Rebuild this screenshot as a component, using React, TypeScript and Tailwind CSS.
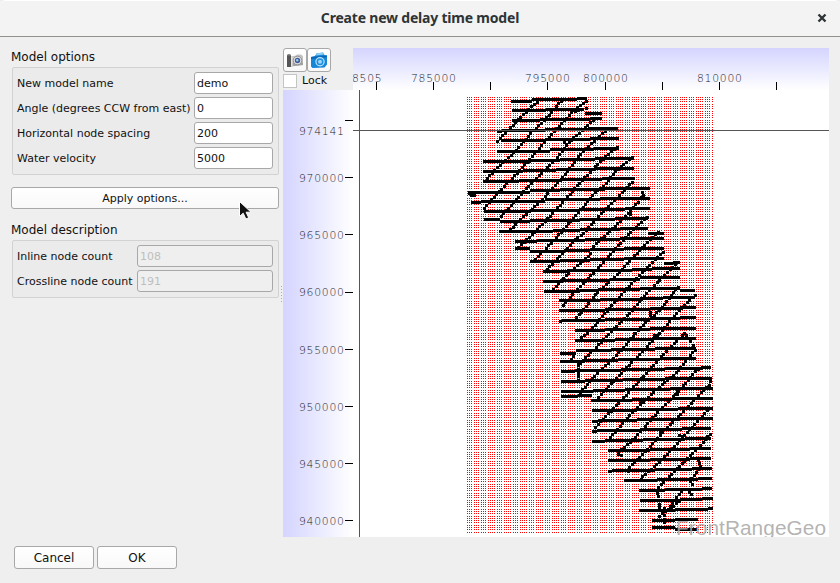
import type { ReactNode } from "react";

// Survey passes: [start x, then pairs of (centre y, end x)], in plot pixels.
const passes: number[][] = [
  [511, 101, 532, 99, 577, 98.3, 587],
  [512, 110.5, 546, 109.5, 584],
  [585, 113.5, 602],
  [512, 120.5, 540, 119.5, 590, 118.5, 602],
  [497, 131.5, 502, 130.5, 545, 129.3, 588, 128.5, 618],
  [501, 140.5, 545, 139.5, 590, 138.5, 619],
  [497, 151.3, 550, 149.7, 594, 148.3, 619],
  [483, 161.3, 531, 160.5, 560, 159.3, 595, 158.5, 634],
  [483, 171.3, 523, 170.3, 556, 169.3, 596, 168.5, 634],
  [483, 181.3, 519, 180.4, 560, 179.3, 602, 178.5, 635],
  [468, 192.3, 530, 190.7, 560, 189.6, 605, 188.5, 650],
  [471, 202.4, 481, 201.3, 545, 199.7, 600, 198.5, 650],
  [484, 211.5, 530, 210.4, 580, 209.3, 625, 208.4, 650],
  [484, 219.4, 500, 221.3, 530, 220.3, 580, 219.4, 615, 218.4, 648],
  [499, 231.3, 553, 230.5, 580, 229.4, 620, 228.4, 648],
  [648, 233.5, 664],
  [515, 241.3, 537, 240.4, 585, 239.4, 620, 238.4, 664],
  [515, 248.4, 530, 251.4, 565, 250.4, 590, 249.4, 624, 248.4, 664],
  [530, 261.4, 560, 260.4, 590, 259.4, 624, 258.4, 664],
  [664, 263.5, 673, 262.4, 680],
  [543, 271.4, 567, 270.4, 632, 269, 652, 268.4, 680],
  [543, 281.4, 560, 280.4, 610, 279.4, 640, 277.6, 680],
  [544, 291.4, 580, 290.4, 598, 289.4, 640, 288.4, 680, 290.4, 695],
  [559, 300.4, 600, 299.4, 640, 298.4, 663, 297.4, 695],
  [559, 310.4, 605, 309.4, 650, 308.4, 680, 307.4, 696],
  [559, 321.4, 562, 320.4, 605, 319.4, 650, 318.4, 680, 317.4, 696],
  [575, 330.4, 605, 329.4, 650, 328.4, 696],
  [575, 340.4, 615, 339.4, 653, 338.4, 696],
  [576, 350.5, 611, 349.5, 655, 348.4, 696],
  [560, 353.5, 576],
  [560, 361.4, 585, 360.4, 618, 359.4, 660, 358.4, 696],
  [561, 371.4, 575, 370.4, 621, 369.4, 665, 368.4, 701, 367.4, 709],
  [561, 381.4, 585, 380.6, 623, 379.5, 665, 378.4, 712],
  [561, 391.4, 593, 390.4, 625, 389.4, 670, 388.4, 713],
  [561, 396.4, 578, 395.6, 592],
  [591, 400.4, 632, 399.4, 672, 398.4, 713],
  [592, 410.4, 635, 409.4, 678, 408.4, 713],
  [592, 421.3, 598, 420.4, 637, 419.4, 680, 418.4, 713],
  [592, 431.4, 597, 430.4, 640, 429.4, 682, 428.4, 711],
  [592, 441.4, 605, 440.4, 643, 439.4, 685, 438.4, 711],
  [608, 450.4, 650, 449.4, 690, 448.4, 711],
  [608, 460.4, 650, 459.4, 690, 458.4, 711],
  [608, 471.4, 612, 470.4, 655, 469.4, 692, 468.4, 712],
  [624, 480.4, 657, 479.4, 698, 478.4, 712],
  [639, 490.4, 665, 489.4, 702, 488.4, 712],
  [640, 500.4, 680, 499.4, 702, 498.4, 713],
  [639, 510.4, 675, 509.4, 708, 508.4, 713],
  [652, 520.4, 675, 519.4, 698],
  [652, 527.4, 675, 529.4, 697],
];

// Cross passes as flat x, y lists.
const crossings: number[][] = [
  [537, 102, 531, 107, 497, 142],
  [561, 101, 551, 114, 532, 132, 515, 152, 503, 162, 487, 179],
  [586, 101, 573, 111, 543, 144, 523, 167, 497, 194, 484, 209],
  [593, 120, 580, 133, 573, 138, 557, 158, 527, 188, 500, 218],
  [605, 131, 580, 155, 567, 173, 537, 205, 522, 218, 509, 232],
  [617, 147, 597, 165, 580, 183, 553, 213, 532, 235, 517, 249],
  [632, 157, 627, 162, 615, 172, 605, 185, 595, 193, 578, 213, 557, 237, 533, 262],
  [632, 182, 622, 193, 602, 213, 582, 235, 577, 238, 545, 272],
  [638, 202, 627, 215, 595, 245, 588, 257, 571, 271, 550, 293],
  [647, 217, 630, 233, 610, 255, 590, 277, 575, 292, 562, 307],
  [658, 232, 640, 250, 617, 275, 597, 293, 586, 307, 573, 322],
  [663, 252, 633, 282, 608, 310, 597, 323, 590, 331, 577, 342],
  [678, 262, 650, 290, 630, 313, 608, 335, 577, 367],
  [678, 287, 663, 307, 640, 328, 620, 352, 593, 378, 580, 393],
  [695, 295, 677, 313, 660, 333, 642, 352, 620, 375, 598, 398],
  [693, 345, 685, 333, 663, 355, 645, 375, 617, 405, 595, 428],
  [695, 350, 677, 372, 653, 393, 633, 412, 610, 438],
  [709, 367, 697, 370, 678, 392, 657, 413, 635, 438, 618, 453],
  [710, 378, 710, 384, 683, 412, 665, 430, 645, 452, 630, 467, 628, 473],
  [710, 408, 688, 432, 660, 462, 642, 477, 641, 483],
  [710, 434, 702, 444, 688, 458, 658, 488],
  [698, 460, 701, 466, 690, 481, 694, 487],
  [684, 489, 677, 497, 668, 510, 658, 517],
  [689, 492, 693, 497],
  [679, 501, 669, 511],
  [656, 490, 659, 498, 660, 510],
  [664, 508, 664, 525],
  [469, 193, 471, 196, 475, 191, 474, 198],
  [564, 142, 568, 146],
  [642, 192, 644, 195, 641, 198],
  [578, 362, 578, 382],
  [571, 359, 575, 354],
  [660, 431, 660, 437],
  [650, 312, 650, 317],
  [630, 211, 630, 215],
  [654, 335, 653, 342],
  [634, 333, 633, 338],
  [677, 391, 677, 398],
  [640, 401, 645, 403],
  [679, 435, 684, 437],
  [586, 108, 573, 112],
  [618, 454, 624, 456],
];

function stamps(p: number[]) {
  const out: [number, number][] = [];
  let carry = 0;
  for (let i = 0; i + 3 < p.length; i += 2) {
    const dx = p[i + 2] - p[i];
    const dy = p[i + 3] - p[i + 1];
    const len = Math.hypot(dx, dy);
    let d = carry;
    for (; d <= len; d += 3.7) {
      out.push([Math.round(p[i] + (dx * d) / len - 1.5), Math.round(p[i + 1] + (dy * d) / len - 1.5)]);
    }
    carry = d - len;
  }
  return out;
}

const columns = Array.from({ length: 108 }, (_, i) => Math.floor(467.42 + i * 2.2867));
const rows = Array.from({ length: 191 }, (_, i) => Math.floor(97.4 + i * 2.288));
const columnPath = columns.map((x) => `M${x} 0h1v1h-1z`).join("");

function Plot() {
  return (
    <svg width="476" height="447" viewBox="353 90 476 447" shapeRendering="crispEdges" className="block bg-white">
      <defs>
        <path id="nodes" d={columnPath} fill="#f00" />
      </defs>
      {rows.map((y) => (
        <use key={y} href="#nodes" y={y} />
      ))}
      {passes.map((p, k) => {
        const parts: ReactNode[] = [];
        for (let i = 0; i + 2 < p.length; i += 2) {
          parts.push(<rect key={i} x={p[i]} y={Math.round(p[i + 1] - 1.5)} width={p[i + 2] - p[i]} height="3" />);
        }
        return <g key={k}>{parts}</g>;
      })}
      {crossings.map((p, k) => (
        <g key={k}>
          {stamps(p).map(([x, y], i) => (
            <rect key={i} x={x} y={y} width="3" height="3" />
          ))}
        </g>
      ))}
      <rect x="359" y="90" width="1" height="447" fill="#555" />
      <rect x="353" y="130" width="476" height="1" fill="#555" />
      <text x="676" y="535" fontSize="20.8" textLength="150" fill="#aaa" fillOpacity=".9" fontFamily="'Liberation Sans', sans-serif">
        FrontRangeGeo
      </text>
    </svg>
  );
}

const axisText = {
  fontFamily: "'DejaVu Sans', sans-serif",
  fontWeight: 200,
  fontSize: 10.8,
  letterSpacing: "0.75px",
  fill: "#222",
};

function TopAxis() {
  const ticks = [376, 433, 490, 547, 605, 662, 719, 776];
  const labels: [number, string][] = [
    [352, "8505"],
    [411, "785000"],
    [525, "795000"],
    [583, "800000"],
    [697, "810000"],
  ];
  return (
    <svg width="476" height="42" viewBox="353 48 476 42" className="block bg-linear-to-b from-[#d4d4ff] to-white">
      {labels.map(([x, t]) => (
        <text key={t} x={x} y="82" {...axisText}>{t}</text>
      ))}
      {ticks.map((x) => (
        <rect key={x} x={x} y="82" width="1" height="8" />
      ))}
    </svg>
  );
}

function LeftAxis() {
  const ticks = [120, 177, 234, 292, 349, 406, 463, 520];
  const labels: [number, string][] = [
    [135, "974141"],
    [182, "970000"],
    [239, "965000"],
    [296, "960000"],
    [354, "955000"],
    [411, "950000"],
    [468, "945000"],
    [525, "940000"],
  ];
  return (
    <svg width="70" height="447" viewBox="283 90 70 447" className="block bg-linear-to-r from-[#d4d4ff] to-white">
      {labels.map(([y, t]) => (
        <text key={t} x="299" y={y} {...axisText}>{t}</text>
      ))}
      {ticks.map((y) => (
        <rect key={y} x="345" y={y} width="8" height="1" />
      ))}
    </svg>
  );
}

function Field({ label, value, width, disabled }: { label: string; value: string; width: string; disabled?: boolean }) {
  return (
    <div className="flex h-[22px] items-center justify-between">
      <span className="pt-[2px] whitespace-nowrap">{label}</span>
      <span
        className={`flex h-[22px] items-center rounded-[3px] border border-[#a8a8a8] pt-[2px] pl-[2px] ${width} ${
          disabled ? "bg-[#efefef] text-[#bebebe]" : "bg-white"
        }`}
      >
        {value}
      </span>
    </div>
  );
}

function Button({ children, className }: { children: ReactNode; className: string }) {
  return (
    <button className={`flex items-center justify-center rounded-[3px] border border-[#a8a8a8] bg-linear-to-b from-white to-[#f8f8f8] ${className}`}>
      {children}
    </button>
  );
}

function CameraGray() {
  return (
    <svg width="18" height="18" viewBox="0 0 18 18" className="shrink-0">
      <path d="M5 5.500l5-1 1-1h4l2 1.500v9l-12 1z" fill="#c4c4c4" />
      <path d="M5 12l12-.5V14L5 15.500z" fill="#a2a2a2" />
      <rect x="1" y="4" width="4" height="12" rx=".5" fill="#555" />
      <rect x="1.500" y="3" width="3" height="1.500" fill="#888" />
      <rect x="5" y="6" width="1.500" height="9" fill="#e4e4e4" />
      <circle cx="11.500" cy="9.500" r="4.300" fill="#e2e2e2" stroke="#8a8a8a" strokeWidth=".9" />
      <circle cx="11.500" cy="9.500" r="2.700" fill="#3f5f98" />
      <circle cx="11.200" cy="9.200" r="1.200" fill="#9fc4f2" />
    </svg>
  );
}

function CameraBlue() {
  return (
    <svg width="18" height="18" viewBox="0 0 18 18" className="shrink-0">
      <path d="M1 6l4-1 1.500-2.500L13 1.500l1.500 2.500 2.500.5v9l-2.500 3L2.500 17 1 15.500z" fill="#1686d9" />
      <path d="M6.500 2.500L13 1.500l1 2-8 1z" fill="#8fd0f8" />
      <path d="M1 6l16-1.500v1.800L1 8z" fill="#0b67b5" />
      <circle cx="10" cy="10.800" r="4.700" fill="#bfe5fb" />
      <circle cx="10" cy="10.800" r="3.500" fill="#1b8ee0" />
      <circle cx="10" cy="10.800" r="2" fill="#9fd6f8" />
    </svg>
  );
}

export default function App() {
  return (
    <div className="relative flex h-[583px] w-[840px] flex-col overflow-hidden bg-[#efefef] font-['DejaVu_Sans',sans-serif] text-[11px] text-[#111]">
      <header className="relative flex h-[37px] shrink-0 items-center justify-center rounded-t-[6px] border-t border-b border-t-white border-b-[#92928a] bg-[#f3f3f3]">
        <h1 className="pb-[3px] font-['Noto_Sans',sans-serif] text-[14px] font-bold tracking-[-0.2px] text-[#2e3436]">Create new delay time model</h1>
        <svg className="absolute top-[12px] right-[13px]" width="10" height="10" viewBox="0 0 10 10">
          <path d="M1.500 1.500l7 7M8.500 1.500l-7 7" stroke="#2e3436" strokeWidth="2.400" />
        </svg>
      </header>
      <main className="flex h-[500px] shrink-0 pt-[11px]">
        <aside className="flex w-[283px] flex-col pl-[11px]">
          <h2 className="h-[19px] text-[12px] leading-[18px]">Model options</h2>
          <section className="ml-px flex h-[108px] w-[267px] flex-col gap-[3px] rounded-[2px] border border-[#d2d2d2] bg-[#ebebeb] pt-1 pr-[5px] pl-1">
            <Field label="New model name" value="demo" width="w-[79px]" />
            <Field label="Angle (degrees CCW from east)" value="0" width="w-[79px]" />
            <Field label="Horizontal node spacing" value="200" width="w-[79px]" />
            <Field label="Water velocity" value="5000" width="w-[79px]" />
          </section>
          <Button className="mt-3 h-[22px] w-[268px] pt-[2px]">Apply options...</Button>
          <h2 className="mt-3 h-[19px] text-[12px] leading-[18px]">Model description</h2>
          <section className="ml-px flex h-[58px] w-[267px] flex-col gap-[3px] rounded-[2px] border border-[#d2d2d2] bg-[#ebebeb] pt-1 pr-[5px] pl-1">
            <Field label="Inline node count" value="108" width="w-[136px]" disabled />
            <Field label="Crossline node count" value="191" width="w-[136px]" disabled />
          </section>
        </aside>
        <div className="flex flex-col">
          <div className="flex h-[42px]">
            <div className="w-[70px]">
              <div className="flex">
                <Button className="h-6 w-6 shrink-0"><CameraGray /></Button>
                <Button className="h-6 w-6 shrink-0"><CameraBlue /></Button>
              </div>
              <div className="flex items-center gap-[5px]">
                <span className="h-[14px] w-[14px] border border-[#c4c4c4] bg-white" />
                <span className="pt-px leading-[16px]">Lock</span>
              </div>
            </div>
            <TopAxis />
          </div>
          <div className="flex">
            <LeftAxis />
            <Plot />
          </div>
        </div>
      </main>
      <footer className="flex gap-[3px] pt-[9px] pl-[14px] text-[12px]">
        <Button className="h-[23px] w-20">Cancel</Button>
        <Button className="h-[23px] w-20">OK</Button>
      </footer>
      <svg className="absolute top-[286px] left-[281px]" width="2" height="17" viewBox="0 0 2 17">
        <path d="M.5 0v17" stroke="#aaa" strokeDasharray="1 2" />
      </svg>
      <svg className="absolute top-[200px] left-[238px]" width="14" height="21" viewBox="0 0 14 21">
        <path d="M1.500 1.500v15l3.700-3.300 2.700 5.800 2.800-1.300-2.600-5.500h5z" fill="#111" stroke="#fff" />
      </svg>
    </div>
  );
}
